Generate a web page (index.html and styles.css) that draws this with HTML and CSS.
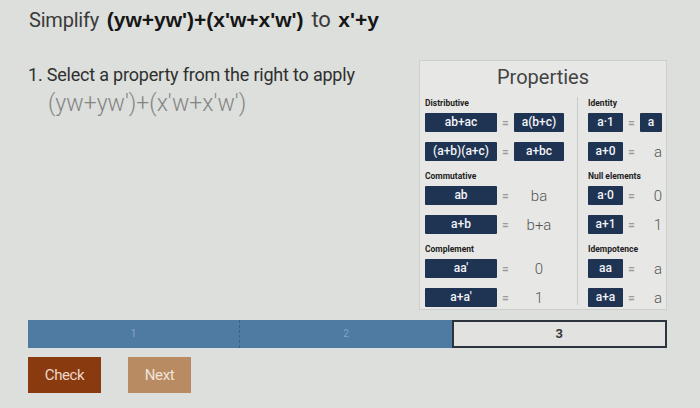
FILE: index.html
```html
<!DOCTYPE html>
<html>
<head>
<meta charset="utf-8">
<link rel="stylesheet" href="styles.css">
</head>
<body>
<div class="page">
  <div class="title">Simplify <b>(yw+yw')+(x'w+x'w')</b> <span class="to">to</span> <b>x'+y</b></div>
  <div class="main">
    <div class="left">
      <div class="step">1. Select a property from the right to apply</div>
      <div class="expr">(yw+yw')+(x'w+x'w')</div>
    </div>
    <div class="panel">
      <div class="panel-title">Properties</div>
      <div class="cols">
        <div class="col col-l">
          <div class="label">Distributive</div>
          <div class="row"><span class="btn">ab+ac</span><span class="eq">=</span><span class="btn">a(b+c)</span></div>
          <div class="row"><span class="btn">(a+b)(a+c)</span><span class="eq">=</span><span class="btn">a+bc</span></div>
          <div class="label">Commutative</div>
          <div class="row"><span class="btn">ab</span><span class="eq">=</span><span class="val">ba</span></div>
          <div class="row"><span class="btn">a+b</span><span class="eq">=</span><span class="val">b+a</span></div>
          <div class="label">Complement</div>
          <div class="row"><span class="btn">aa'</span><span class="eq">=</span><span class="val">0</span></div>
          <div class="row"><span class="btn">a+a'</span><span class="eq">=</span><span class="val">1</span></div>
        </div>
        <div class="col col-r">
          <div class="label">Identity</div>
          <div class="row"><span class="btn">a·1</span><span class="eq">=</span><span class="btn">a</span></div>
          <div class="row"><span class="btn">a+0</span><span class="eq">=</span><span class="val">a</span></div>
          <div class="label">Null elements</div>
          <div class="row"><span class="btn">a·0</span><span class="eq">=</span><span class="val">0</span></div>
          <div class="row"><span class="btn">a+1</span><span class="eq">=</span><span class="val">1</span></div>
          <div class="label">Idempotence</div>
          <div class="row"><span class="btn">aa</span><span class="eq">=</span><span class="val">a</span></div>
          <div class="row"><span class="btn">a+a</span><span class="eq">=</span><span class="val">a</span></div>
        </div>
      </div>
    </div>
  </div>
  <div class="progress">
    <div class="seg done">1</div>
    <div class="seg done">2</div>
    <div class="seg current">3</div>
  </div>
  <div class="actions">
    <div class="action check">Check</div>
    <div class="action next">Next</div>
  </div>
</div>
</body>
</html>
```

FILE: styles.css
```css
html, body {
  margin: 0;
  padding: 0;
}
body {
  background: #dcdfdc;
  font-family: Roboto, "Liberation Sans", sans-serif;
  color: #333;
  width: 700px;
  height: 408px;
  overflow: hidden;
}
.page {
  padding: 6px 33px 0 28px;
}
.title {
  height: 28px;
  line-height: 28px;
  font-size: 20px;
  color: #3a3a3a;
  padding-left: 1px;
  letter-spacing: -0.2px;
  word-spacing: 3px;
  white-space: nowrap;
}
.title b {
  font-family: "Liberation Sans", Arial, sans-serif;
  font-size: 21px;
  color: #161616;
  font-weight: 700;
  letter-spacing: 0;
}
.title .to {
  font-size: 22px;
}
.main {
  display: flex;
  justify-content: space-between;
  margin-top: 26px;
}
.left {
  padding-top: 4px;
}
.step {
  font-size: 18px;
  line-height: 22px;
  color: #2f2f2f;
  letter-spacing: -0.2px;
}
.expr {
  margin-top: 5px;
  margin-left: 20px;
  font-size: 23px;
  line-height: 26px;
  font-weight: 300;
  color: #858585;
  letter-spacing: 0;
}
.panel {
  width: 246px;
  height: 248px;
  border: 1px solid #cdcfcc;
  background: #e7e8e5;
  box-sizing: content-box;
}
.panel-title {
  text-align: center;
  font-size: 20px;
  line-height: 24px;
  margin-top: 4px;
  color: #444;
}
.cols {
  display: flex;
  margin-top: 8px;
  padding-left: 5px;
}
.col-l {
  width: 152px;
}
.col-r {
  border-left: 1px solid #c9cbc8;
  padding-left: 10px;
  width: 78px;
  height: 208px;
}
.label {
  font-size: 8.5px;
  font-weight: 700;
  line-height: 12px;
  height: 12px;
  color: #222;
  margin-bottom: 4px;
}
.row {
  display: grid;
  height: 19px;
  align-items: center;
  margin-bottom: 10px;
}
.row + .label {
  margin-top: -1px;
}
.col-l .row {
  grid-template-columns: 72px 17px 50px;
}
.col-r .row {
  grid-template-columns: 35px 17px 22px;
}
.btn {
  background: #1f3353;
  color: #f2f4f7;
  height: 19px;
  line-height: 19px;
  font-size: 12px;
  font-weight: 500;
  text-align: center;
  border-radius: 1px;
}
.eq {
  text-align: center;
  font-size: 12px;
  font-weight: 700;
  color: #9a9c9a;
}
.val {
  text-align: center;
  font-size: 15px;
  font-weight: 300;
  color: #555;
}
.col-r .val {
  text-align: right;
}
.progress {
  display: flex;
  height: 28px;
  margin-top: 10px;
}
.seg {
  flex: 1;
  text-align: center;
  line-height: 28px;
  font-size: 10px;
}
.done {
  background: #4f7aa1;
  color: #86a5c4;
}
.done + .done {
  border-left: 1px dashed #39628a;
}
.current {
  background: #e2e3e0;
  border: 2px solid #2c3440;
  line-height: 24px;
  font-size: 13px;
  font-weight: 700;
  color: #3a3a3a;
}
.actions {
  display: flex;
  gap: 27px;
  margin-top: 9px;
}
.action {
  height: 36px;
  line-height: 36px;
  font-size: 15px;
  text-align: center;
  letter-spacing: -0.4px;
}
.check {
  width: 73px;
  background: #8a3a0f;
  color: #ead9cc;
}
.next {
  width: 63px;
  background: #b98b63;
  color: #f1e4d8;
}
```
